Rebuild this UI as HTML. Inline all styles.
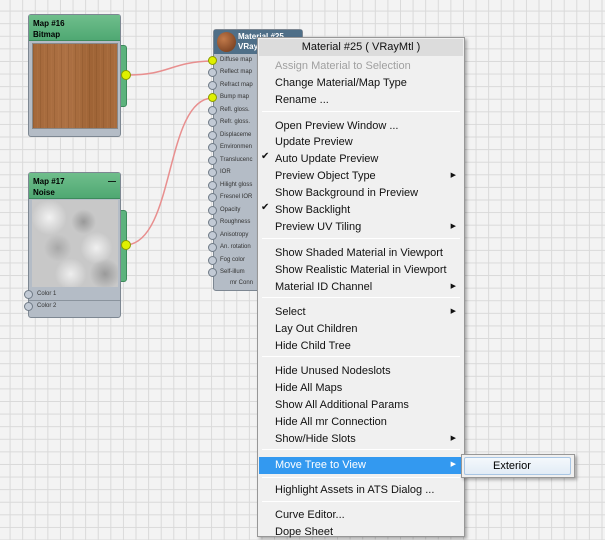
<!DOCTYPE html><html><head><style>
*{margin:0;padding:0;box-sizing:border-box}
body{width:605px;height:532px;overflow:hidden;position:relative;font-family:"Liberation Sans",sans-serif;
background-color:#f3f3f3;background-image:linear-gradient(#d9d9d9 1px,transparent 1px),linear-gradient(90deg,#d9d9d9 1px,transparent 1px);background-size:12.6px 12.6px;background-position:-3px -2px}
.abs{position:absolute}
.node{position:absolute;background:#b4bcc6;border:1px solid #7d8792;border-radius:3px}
.gh{background:linear-gradient(#6fbe8c,#4fa873);color:#000;font-size:8px;font-weight:bold;padding:3px 4px;line-height:11px;border-bottom:1px solid #3c8a5c}
.slot{position:absolute;left:-5px;width:9px;height:9px;border-radius:50%;background:#c2cad5;border:1px solid #6f7a86}
.on{background:#dff000;border-color:#8a9a00}
.sl{position:absolute;font-size:6px;color:#333;left:8px}
.menu{position:absolute;left:257px;top:37px;width:208px;height:500px;background:#f0f0f0;border:1px solid #979797;box-shadow:2px 2px 3px rgba(0,0,0,.3);font-size:11px;color:#111}
.it{position:absolute;left:17px;height:16px;line-height:16px}
.sep{position:absolute;left:4px;right:4px;height:1px;background:#c8c8c8;border-bottom:1px solid #fff}
.arr{position:absolute;right:8px;font-size:7px}
.ck{position:absolute;left:3px;font-size:10px}
</style></head><body>
<svg class="abs" style="left:0;top:0" width="605" height="532"><path d="M127 75 C170 75,170 62,212 61" stroke="#e88f8f" stroke-width="1.5" fill="none"/><path d="M127 245 C175 240,165 100,212 98" stroke="#e88f8f" stroke-width="1.5" fill="none"/></svg>
<div class="abs" style="left:118px;top:45px;width:9px;height:62px;background:#5cb37d;border:1px solid #3d8a5c;border-radius:0 3px 3px 0"></div>
<div class="node" style="left:28px;top:14px;width:93px;height:123px">
<div class="gh" style="height:26px">Map #16<br>Bitmap</div>
<div class="abs" style="left:3px;top:28px;width:86px;height:86px;background:repeating-linear-gradient(90deg,rgba(120,70,30,.25) 0 1px,transparent 1px 4px,rgba(190,130,80,.2) 4px 5px,transparent 5px 7px),linear-gradient(90deg,#a4683a,#ad7144 40%,#9f6436 70%,#a86c3e);border:1px solid #888"></div></div>
<div class="abs" style="left:121px;top:70px;width:10px;height:10px;border-radius:50%;background:#dff000;border:1px solid #8a9a00"></div>
<div class="abs" style="left:118px;top:210px;width:9px;height:72px;background:#5cb37d;border:1px solid #3d8a5c;border-radius:0 3px 3px 0"></div>
<div class="node" style="left:28px;top:172px;width:93px;height:146px">
<div class="gh" style="height:26px">Map #17<span style="float:right">—</span><br>Noise</div>
<div class="abs" style="left:3px;top:27px;width:86px;height:87px;background:radial-gradient(circle at 20% 20%,#f2f2f2,transparent 18%),radial-gradient(circle at 60% 25%,#999,transparent 15%),radial-gradient(circle at 75% 55%,#f0f0f0,transparent 20%),radial-gradient(circle at 30% 55%,#a8a8a8,transparent 18%),radial-gradient(circle at 45% 85%,#eee,transparent 18%),radial-gradient(circle at 85% 85%,#9a9a9a,transparent 15%),#c8c8c8"></div>
<div class="slot" style="top:117px"></div><div class="sl" style="top:118px">Color 1</div>
<div class="abs" style="left:0;right:0;top:127px;height:1px;background:#8a939d"></div>
<div class="slot" style="top:129px"></div><div class="sl" style="top:130px">Color 2</div></div>
<div class="abs" style="left:121px;top:240px;width:10px;height:10px;border-radius:50%;background:#dff000;border:1px solid #8a9a00"></div>
<div class="node" style="left:213px;top:29px;width:90px;height:262px">
<div style="height:24px;background:#4f6f88;color:#fff;font-size:8px;font-weight:bold;padding:2px 0 0 24px;line-height:10px">Material #25<br>VRay</div>
<div class="abs" style="left:3px;top:2px;width:19px;height:20px;border-radius:50%;background:radial-gradient(circle at 35% 35%,#c27a4a,#6a3418)"></div>
</div>
<div class="abs" style="left:208px;top:56px;width:60px">
<div style="position:relative;font-size:6px;color:#333">
<div class="slot on" style="left:0;top:0"></div><div class="sl" style="left:12px;top:1px">Diffuse map</div>
<div class="slot" style="left:0;top:12px"></div><div class="sl" style="left:12px;top:13px">Reflect map</div>
<div class="slot" style="left:0;top:25px"></div><div class="sl" style="left:12px;top:26px">Refract map</div>
<div class="slot on" style="left:0;top:37px"></div><div class="sl" style="left:12px;top:38px">Bump map</div>
<div class="slot" style="left:0;top:50px"></div><div class="sl" style="left:12px;top:51px">Refl. gloss.</div>
<div class="slot" style="left:0;top:62px"></div><div class="sl" style="left:12px;top:63px">Refr. gloss.</div>
<div class="slot" style="left:0;top:75px"></div><div class="sl" style="left:12px;top:76px">Displaceme</div>
<div class="slot" style="left:0;top:87px"></div><div class="sl" style="left:12px;top:88px">Environmen</div>
<div class="slot" style="left:0;top:100px"></div><div class="sl" style="left:12px;top:101px">Translucenc</div>
<div class="slot" style="left:0;top:112px"></div><div class="sl" style="left:12px;top:113px">IOR</div>
<div class="slot" style="left:0;top:125px"></div><div class="sl" style="left:12px;top:126px">Hilight gloss</div>
<div class="slot" style="left:0;top:137px"></div><div class="sl" style="left:12px;top:138px">Fresnel IOR</div>
<div class="slot" style="left:0;top:150px"></div><div class="sl" style="left:12px;top:151px">Opacity</div>
<div class="slot" style="left:0;top:162px"></div><div class="sl" style="left:12px;top:163px">Roughness</div>
<div class="slot" style="left:0;top:175px"></div><div class="sl" style="left:12px;top:176px">Anisotropy</div>
<div class="slot" style="left:0;top:187px"></div><div class="sl" style="left:12px;top:188px">An. rotation</div>
<div class="slot" style="left:0;top:200px"></div><div class="sl" style="left:12px;top:201px">Fog color</div>
<div class="slot" style="left:0;top:212px"></div><div class="sl" style="left:12px;top:213px">Self-illum</div>
<div class="sl" style="left:22px;top:224px">mr Conn</div>
</div></div>
<div class="menu">
<div class="abs" style="left:1px;right:1px;top:1px;height:17px;background:#dcdcdc;text-align:center;line-height:17px">Material #25 ( VRayMtl )</div>
<div class="it" style="top:20px;color:#a0a0a0">Assign Material to Selection</div>
<div class="it" style="top:37px">Change Material/Map Type</div>
<div class="it" style="top:54px">Rename ...</div>
<div class="sep" style="top:73px"></div>
<div class="it" style="top:80px">Open Preview Window ...</div>
<div class="it" style="top:96px">Update Preview</div>
<div class="ck" style="top:113px">✔</div><div class="it" style="top:113px">Auto Update Preview</div>
<div class="it" style="top:130px">Preview Object Type</div><div class="arr" style="top:133px">▶</div>
<div class="it" style="top:147px">Show Background in Preview</div>
<div class="ck" style="top:164px">✔</div><div class="it" style="top:164px">Show Backlight</div>
<div class="it" style="top:181px">Preview UV Tiling</div><div class="arr" style="top:184px">▶</div>
<div class="sep" style="top:200px"></div>
<div class="it" style="top:207px">Show Shaded Material in Viewport</div>
<div class="it" style="top:224px">Show Realistic Material in Viewport</div>
<div class="it" style="top:241px">Material ID Channel</div><div class="arr" style="top:244px">▶</div>
<div class="sep" style="top:259px"></div>
<div class="it" style="top:266px">Select</div><div class="arr" style="top:269px">▶</div>
<div class="it" style="top:283px">Lay Out Children</div>
<div class="it" style="top:300px">Hide Child Tree</div>
<div class="sep" style="top:318px"></div>
<div class="it" style="top:325px">Hide Unused Nodeslots</div>
<div class="it" style="top:342px">Hide All Maps</div>
<div class="it" style="top:359px">Show All Additional Params</div>
<div class="it" style="top:376px">Hide All mr Connection</div>
<div class="it" style="top:393px">Show/Hide Slots</div><div class="arr" style="top:396px">▶</div>
<div class="sep" style="top:411px"></div>
<div class="abs" style="left:1px;right:2px;top:419px;height:17px;background:#3399f0"></div>
<div class="it" style="top:419px;color:#fff">Move Tree to View</div><div class="arr" style="top:422px;color:#fff">▶</div>
<div class="sep" style="top:439px"></div>
<div class="it" style="top:444px">Highlight Assets in ATS Dialog ...</div>
<div class="sep" style="top:463px"></div>
<div class="it" style="top:469px">Curve Editor...</div>
<div class="it" style="top:486px">Dope Sheet</div>
</div>
<div class="abs" style="left:461px;top:454px;width:114px;height:24px;background:#f0f0f0;border:1px solid #979797;box-shadow:2px 2px 3px rgba(0,0,0,.3)">
<div class="abs" style="left:2px;top:2px;right:3px;bottom:2px;background:linear-gradient(#f4f8fc,#e2ecf6);border:1px solid #a9c6e4;border-radius:2px;font-size:11px;line-height:16px;padding-left:28px">Exterior</div></div>
</body></html>
